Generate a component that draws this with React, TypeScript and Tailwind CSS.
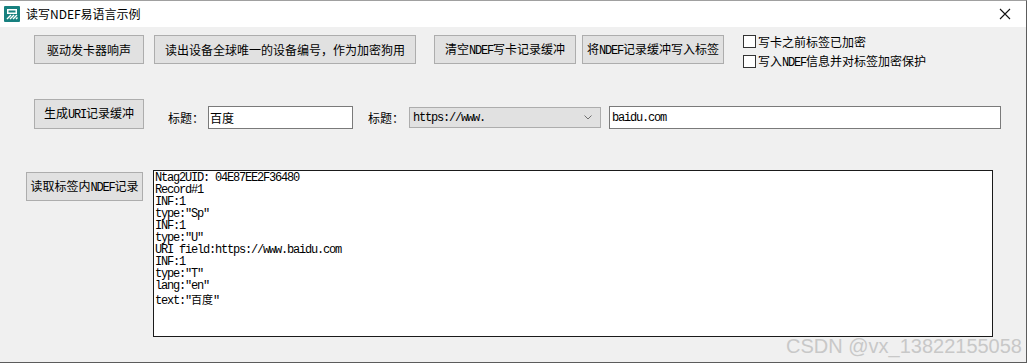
import type { ReactNode } from "react"

const mono = "font-['Liberation_Mono','Noto_Sans_CJK_SC',monospace] tracking-[-1.2px]"

function Btn({ className, children }: { className: string; children: ReactNode }) {
  return (
    <div
      className={`flex items-center justify-center bg-[#e1e1e1] border border-[#adadad] text-[12px] text-black whitespace-nowrap ${className}`}
    >
      <span>{children}</span>
    </div>
  )
}

function Check({ label }: { label: ReactNode }) {
  return (
    <div className="flex items-center h-[13px]">
      <div className="w-[13px] h-[13px] bg-white border border-[#333333]" />
      <span className="ml-[2px] text-[12px] leading-[13px] whitespace-nowrap">{label}</span>
    </div>
  )
}

const lines = [
  "Ntag2UID: 04E87EE2F36480",
  "Record#1",
  "INF:1",
  'type:"Sp"',
  "INF:1",
  'type:"U"',
  "URI field:https://www.baidu.com",
  "INF:1",
  'type:"T"',
  'lang:"en"',
]

function App() {
  return (
    <div className="relative w-[1027px] h-[363px] bg-[#f0f0f0] border-r border-b border-t border-r-[#5c5c5c] border-b-[#5c5c5c] border-t-[#a0a0a0] overflow-hidden font-['Noto_Sans_CJK_SC',sans-serif] text-black">
      {/* title bar */}
      <div className="h-[26px] bg-white flex items-center">
        <svg width="16" height="16" viewBox="0 0 16 16" className="ml-[4px]">
          <rect x="0" y="0" width="16" height="16" rx="1" fill="#17807f" />
          <path d="M3 3h10v1.5H3z M3 3h1.5v5H3z M11.5 3H13v5h-1.5z M3 6.5h10V8H3z" fill="#fff" />
          <path d="M3 13l4-4 M6 13l4-4 M9 13l4-4 M12 13l1.5-1.5" stroke="#fff" strokeWidth="1.4" />
        </svg>
        <span className="ml-[6px] text-[12px] leading-none">读写NDEF易语言示例</span>
        <svg width="12" height="12" viewBox="0 0 12 12" className="ml-auto mr-[15px]">
          <path d="M1 1L11 11M11 1L1 11" stroke="#111" strokeWidth="1.1" />
        </svg>
      </div>

      {/* row 1 */}
      <div className="flex items-start h-[33px] mt-[8px] pl-[34px]">
        <Btn className="w-[110px] h-[29px]">驱动发卡器响声</Btn>
        <Btn className="w-[262px] h-[29px] ml-[10px]">读出设备全球唯一的设备编号，作为加密狗用</Btn>
        <Btn className="w-[142px] h-[29px] ml-[18px]">
          清空<span className={mono}>NDEF</span>写卡记录缓冲
        </Btn>
        <Btn className="w-[142px] h-[29px] ml-[6px]">
          将<span className={mono}>NDEF</span>记录缓冲写入标签
        </Btn>
        <div className="ml-[19px] flex flex-col gap-[7px]">
          <Check label="写卡之前标签已加密" />
          <Check
            label={
              <>
                写入<span className={mono}>NDEF</span>信息并对标签加密保护
              </>
            }
          />
        </div>
      </div>

      {/* row 2 */}
      <div className="flex items-start h-[30px] mt-[31px] pl-[34px]">
        <Btn className="w-[110px] h-[30px]">
          生成<span className={mono}>URI</span>记录缓冲
        </Btn>
        <span className="ml-[24px] mt-[12px] text-[12px] leading-[14px]">标题：</span>
        <div className="ml-[4px] mt-[7px] w-[145px] h-[23px] bg-white border border-[#7a7a7a] flex items-center pl-[1px] text-[12px]">
          百度
        </div>
        <span className="ml-[15px] mt-[12px] text-[12px] leading-[14px]">标题：</span>
        <div className="ml-[5px] mt-[8px] w-[192px] h-[21px] bg-[#e1e1e1] border border-[#adadad] flex items-center pl-[3px] pr-[8px]">
          <span className={`${mono} text-[12px]`}>https://www.</span>
          <svg width="8" height="5" viewBox="0 0 8 5" className="ml-auto">
            <path d="M0.5 0.5L4 4L7.5 0.5" fill="none" stroke="#707070" strokeWidth="1" />
          </svg>
        </div>
        <div className="ml-[8px] mt-[7px] w-[392px] h-[23px] bg-white border border-[#7a7a7a] flex items-center pl-[2px] text-[12px]">
          <span className={mono}>baidu.com</span>
        </div>
      </div>

      {/* row 3 */}
      <div className="flex items-start mt-[41px] pl-[26px]">
        <Btn className="w-[117px] h-[29px] mt-[2px]">
          读取标签内<span className={mono}>NDEF</span>记录
        </Btn>
        <div className="ml-[10px] w-[840px] h-[167px] bg-white border border-[#1a1a1a] pl-[1px] pt-[1px] text-[12px] leading-[12px]">
          {lines.map((l, i) => (
            <div key={i} className={`${mono} whitespace-pre h-[12px]`}>
              {l}
            </div>
          ))}
          <div className="whitespace-pre h-[12px] mt-[1px]">
            <span className={mono}>text:"</span>
            <span className="text-[11px] leading-[11px]">百度</span>
            <span className={mono}>"</span>
          </div>
        </div>
      </div>

      {/* watermark */}
      <div className="absolute right-[4px] bottom-[6px] font-['Liberation_Sans',sans-serif] text-[20px] leading-none text-[#c8c8c8]">
        CSDN @vx_13822155058
      </div>
    </div>
  )
}

export default App
